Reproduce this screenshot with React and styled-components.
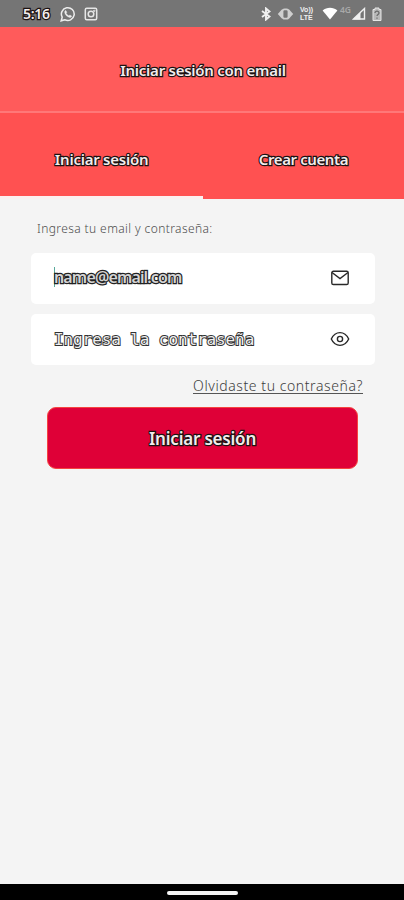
import React from 'react'
import styled, { createGlobalStyle } from 'styled-components'

const colorHeader = '#ff5b5b'
const colorTabs = '#ff5151'
const colorBoton = '#df0037'
const colorFondo = '#f4f4f4'
const fuente = "'Noto Sans', 'Open Sans', sans-serif"

const GlobalStyle = createGlobalStyle`
  * {
    box-sizing: border-box;
  }
  body {
    margin: 0;
    background: ${colorFondo};
    font-family: ${fuente};
  }
`

const Pantalla = styled.div`
  width: 404px;
  height: 900px;
  display: flex;
  flex-direction: column;
  background: ${colorFondo};
  overflow: hidden;
`

const BarraEstado = styled.div`
  height: 27px;
  flex-shrink: 0;
  display: flex;
  align-items: center;
  justify-content: space-between;
  padding: 0 22px 0 23px;
  background: #757575;
`

const GrupoEstado = styled.div`
  display: flex;
  align-items: center;
  gap: ${(props) => props.$gap || 0}px;
`

const Hora = styled.div`
  width: 29px;
  display: flex;
`

const TextoBorde = styled.span`
  color: ${(props) => props.$color || '#f3ecec'};
  font-family: ${(props) => props.$fuente || fuente};
  font-size: ${(props) => props.$size}px;
  font-weight: ${(props) => props.$peso || 600};
  letter-spacing: ${(props) => props.$espacio || 0}px;
  line-height: 20px;
  white-space: nowrap;
  -webkit-text-stroke: ${(props) => props.$borde || 2.4}px ${(props) => props.$trazo || '#1c1212'};
  paint-order: stroke fill;
`

const VoLte = styled.div`
  width: 16px;
  display: flex;
  flex-direction: column;
  color: #f0f0f0;
  font-family: 'Liberation Sans', sans-serif;
  font-size: 7px;
  font-weight: 700;
  line-height: 8px;
`

const Red4G = styled.span`
  color: #a8a8a8;
  font-size: 8.5px;
  font-weight: 600;
  line-height: 8px;
  margin: -8px 1px 0 2px;
`

const Header = styled.header`
  height: 86px;
  flex-shrink: 0;
  display: flex;
  align-items: center;
  justify-content: center;
  background: ${colorHeader};
  border-bottom: 2px solid #ff7878;
  padding: 2px 0 0 2px;
`

const Tabs = styled.nav`
  height: 86px;
  flex-shrink: 0;
  display: flex;
  background: ${colorTabs};
`

const Tab = styled.div`
  width: ${(props) => props.$ancho}px;
  display: flex;
  align-items: center;
  justify-content: center;
  padding-top: ${(props) => (props.$activo ? 9 : 6)}px;
  border-bottom: ${(props) => (props.$activo ? '3px solid #fbf0f0' : 'none')};
`

const Formulario = styled.main`
  flex: 1;
  display: flex;
  flex-direction: column;
  padding: 20px 29px 0 31px;
`

const Ayuda = styled.p`
  margin: 0 0 14px 6px;
  color: #4c4c4c;
  font-size: 12px;
  font-weight: 300;
  letter-spacing: 0.4px;
  line-height: 20px;
`

const Campo = styled.div`
  height: 51px;
  display: flex;
  align-items: center;
  justify-content: space-between;
  padding: 0 25px 1px 23px;
  margin-bottom: 10px;
  background: #fff;
  border-radius: 5px;
`

const Valor = styled.div`
  display: flex;
  align-items: center;
  padding-top: ${(props) => props.$arriba || 0}px;
  padding-bottom: ${(props) => props.$abajo || 0}px;
`

const Cursor = styled.i`
  width: 1px;
  height: 20px;
  margin-right: -1px;
  background: #58a99b;
`

const Enlace = styled.a`
  align-self: flex-end;
  margin: 2px 12px 0 0;
  color: #3c3c3c;
  font-size: 14px;
  font-weight: 300;
  letter-spacing: 0.58px;
  line-height: 18px;
  height: 17px;
  border-bottom: 1px solid #555;
`

const Boton = styled.button`
  height: 62px;
  margin: 13px 17px 0 16px;
  padding: 1px 0 0;
  border: 1px solid #f5443f;
  border-radius: 9px;
  background: ${colorBoton};
`

const BarraNavegacion = styled.footer`
  height: 16px;
  flex-shrink: 0;
  display: flex;
  justify-content: center;
  padding-top: 7px;
  background: #000;
`

const Gesto = styled.div`
  width: 71px;
  height: 4px;
  border-radius: 2px;
  background: #f5f5f5;
`

const IconoWhatsapp = () => (
  <svg width="16" height="16" viewBox="0 0 16 16" fill="none" stroke="#ededed" strokeWidth="1.5">
    <path d="M1.2 14.8l1-3.6a6.4 6.4 0 1 1 2.5 2.5z" />
    <path d="M5.7 4.3l1.2 2-.7 1c.7 1.2 1.5 2 2.7 2.5l1-.8 1.8 1c-.3 1.3-1.4 1.8-2.7 1.3C6.7 10.5 5.2 9 4.7 6.8c-.2-1 .1-2 1-2.5z" fill="#ededed" strokeWidth="0.3" />
  </svg>
)

const IconoInstagram = () => (
  <svg width="14" height="14" viewBox="0 0 14 14" fill="none" stroke="#e6e6e6" strokeWidth="1.5">
    <rect x="1.3" y="1.3" width="11.4" height="11.4" rx="1.5" />
    <circle cx="7" cy="7" r="2.8" />
    <circle cx="10.3" cy="3.8" r="0.4" />
  </svg>
)

const IconoBluetooth = () => (
  <svg width="10" height="14" viewBox="0 0 10 14" fill="none" stroke="#f0f0f0" strokeWidth="1.9">
    <path d="M1 4l7.5 5.5L5 12.5v-11l3.5 3L1 10" />
  </svg>
)

const IconoVibrar = () => (
  <svg width="17" height="14" viewBox="0 0 17 14">
    <path d="M5.3 2v10L.8 7zM11.7 2v10l4.5-5z" fill="#cfcfcf" />
    <rect x="5.5" y="2.3" width="6" height="9.4" rx="2" fill="none" stroke="#cfcfcf" strokeWidth="1.8" />
  </svg>
)

const IconoWifi = () => (
  <svg width="16" height="13" viewBox="0 0 16 13">
    <path d="M.6 3.5C4.8-.2 11.2-.2 15.4 3.5L8 12.5z" fill="#fff" />
  </svg>
)

const IconoSenal = () => (
  <svg width="14" height="13" viewBox="0 0 14 13">
    <path d="M1.5 12L12.5 1.5V12z" fill="none" stroke="#f0f0f0" strokeWidth="1.4" />
    <path d="M1 12.5L8.5 5.5v7z" fill="#f0f0f0" />
  </svg>
)

const IconoBateria = () => (
  <svg width="10" height="14" viewBox="0 0 10 14">
    <path d="M3 1h4v1.500h2v11H1v-11h2z" fill="#b8b8b8" stroke="#e6e6e6" />
    <path d="M3 6c0-2.500 4-2.500 4 0 0 1.500-2 1.500-2 3M5 10.500v1.200" fill="none" stroke="#686868" strokeWidth="1.2" />
  </svg>
)

const IconoSobre = () => (
  <svg width="20" height="16" viewBox="0 0 20 16" fill="none" stroke="#292929" strokeWidth="1.4">
    <rect x="1.8" y="1.2" width="16.4" height="13.3" rx="1.6" />
    <path d="M2 2.5l8 6 8-6" />
  </svg>
)

const IconoOjo = () => (
  <svg width="20" height="16" viewBox="0 0 20 16" fill="none" stroke="#292929" strokeWidth="1.4">
    <path d="M1.3 8C5.3-.5 14.7-.5 18.7 8 14.7 16.5 5.3 16.5 1.3 8z" />
    <circle cx="10" cy="8" r="2.6" />
  </svg>
)

const App = () => {
  return (
    <>
      <GlobalStyle />
      <Pantalla>
        <BarraEstado>
          <GrupoEstado $gap={8}>
            <Hora>
              <TextoBorde $size={14} $espacio={-0.3}>5:16</TextoBorde>
            </Hora>
            <IconoWhatsapp />
            <IconoInstagram />
          </GrupoEstado>
          <GrupoEstado $gap={6}>
            <IconoBluetooth />
            <IconoVibrar />
            <VoLte>
              <span>Vo))</span>
              <span>LTE</span>
            </VoLte>
            <GrupoEstado>
              <IconoWifi />
              <Red4G>4G</Red4G>
              <IconoSenal />
            </GrupoEstado>
            <IconoBateria />
          </GrupoEstado>
        </BarraEstado>
        <Header>
          <TextoBorde $size={15} $espacio={-0.25}>Iniciar sesión con email</TextoBorde>
        </Header>
        <Tabs>
          <Tab $ancho={203} $activo>
            <TextoBorde $size={15} $espacio={-0.25}>Iniciar sesión</TextoBorde>
          </Tab>
          <Tab $ancho={201}>
            <TextoBorde $size={15} $espacio={-0.4}>Crear cuenta</TextoBorde>
          </Tab>
        </Tabs>
        <Formulario>
          <Ayuda>Ingresa tu email y contraseña:</Ayuda>
          <Campo>
            <Valor $abajo={2}>
              <Cursor />
              <TextoBorde $size={16} $espacio={-0.85} $color="#d4d4d4" $trazo="#222">
                name@email.com
              </TextoBorde>
            </Valor>
            <IconoSobre />
          </Campo>
          <Campo>
            <Valor $arriba={2}>
              <TextoBorde
                $size={16}
                $color="#efefef"
                $trazo="#333"
                $peso={400}
                $espacio={-0.1}
                $borde={2}
                $fuente="'DejaVu Sans Mono', monospace"
              >
                Ingresa la contraseña
              </TextoBorde>
            </Valor>
            <IconoOjo />
          </Campo>
          <Enlace>Olvidaste tu contraseña?</Enlace>
          <Boton>
            <TextoBorde $size={17} $espacio={-0.2}>Iniciar sesión</TextoBorde>
          </Boton>
        </Formulario>
        <BarraNavegacion>
          <Gesto />
        </BarraNavegacion>
      </Pantalla>
    </>
  )
}

export default App
